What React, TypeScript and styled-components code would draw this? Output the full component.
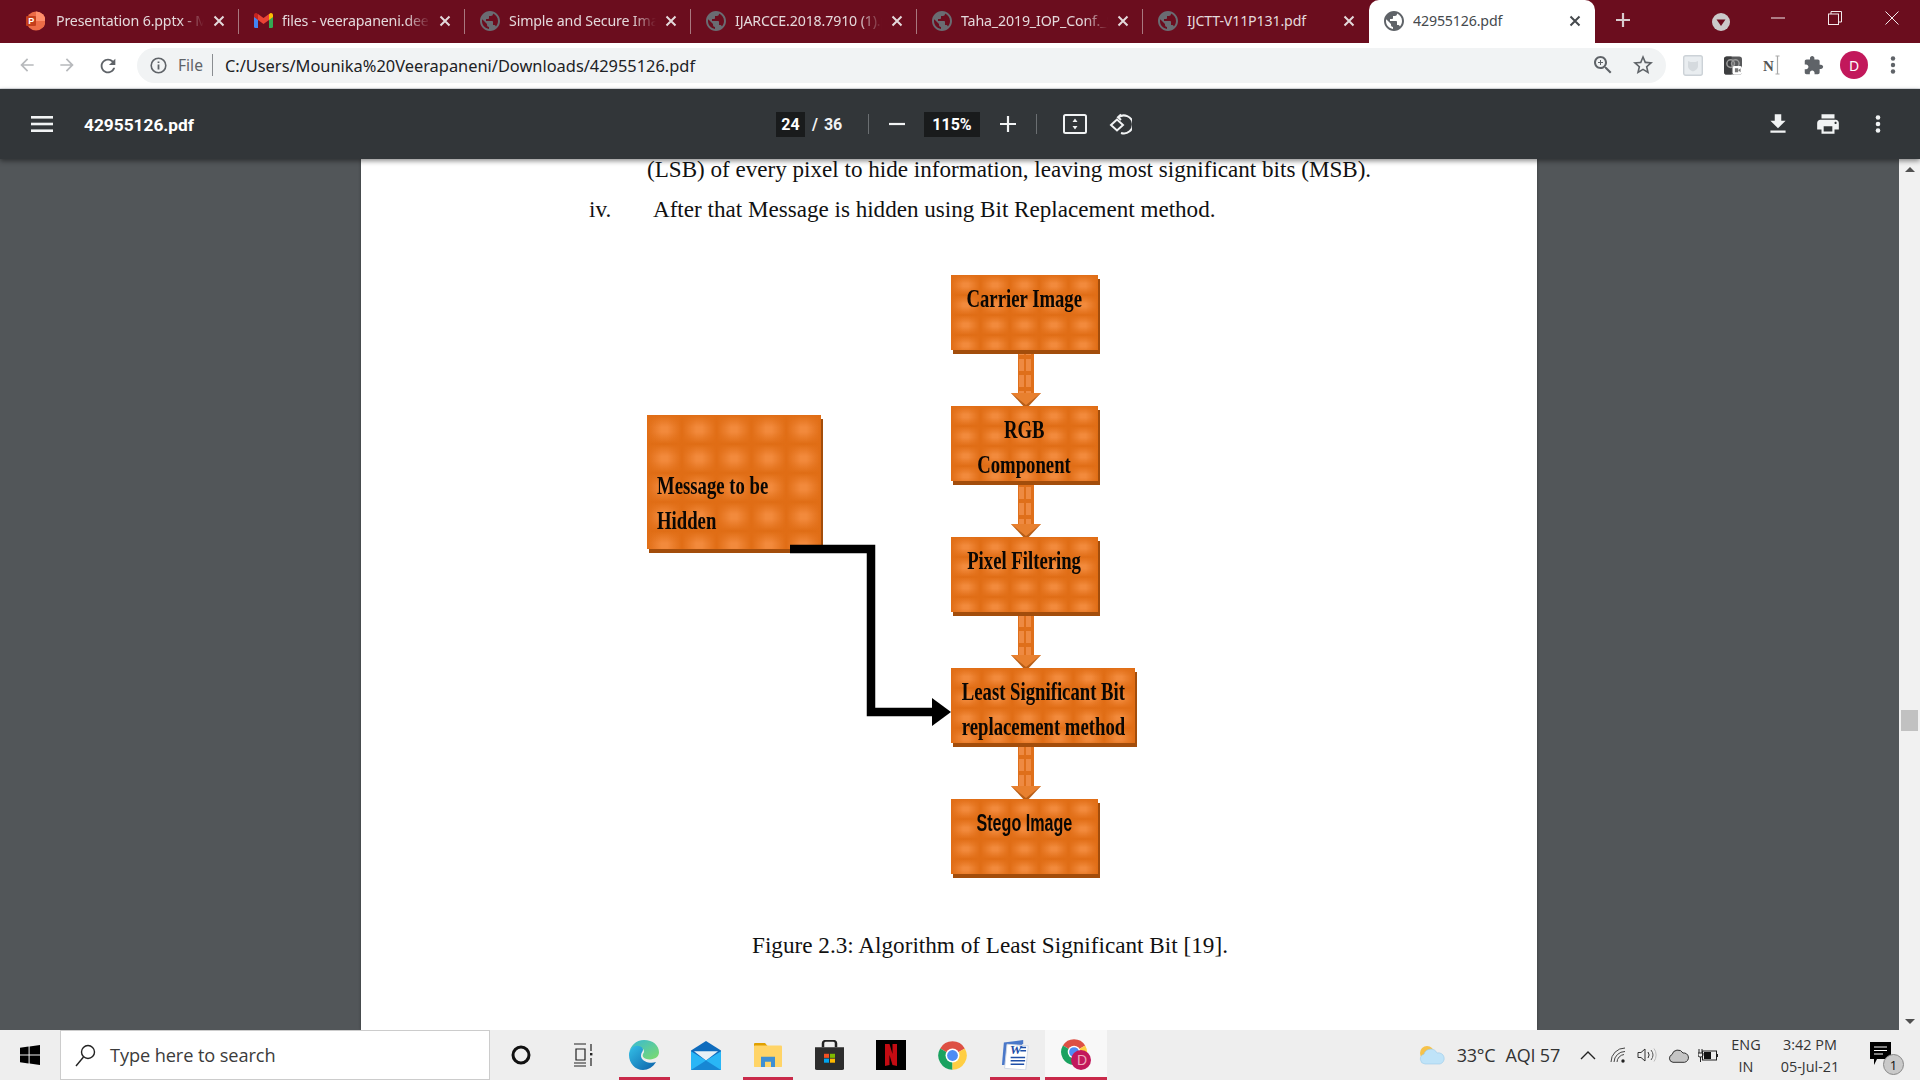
import React from "react";
import styled, { createGlobalStyle } from "styled-components";

const Global = createGlobalStyle`
  html, body { margin: 0; padding: 0; width: 1920px; height: 1080px; overflow: hidden; background: #525659; }
  * { box-sizing: border-box; }
  svg { display: block; flex-shrink: 0; }
`;

const Screen = styled.div`
  width: 1920px; height: 1080px; display: flex; flex-direction: column; overflow: hidden;
  font-family: "Noto Sans", "Open Sans", sans-serif;
`;

/* ---------- Tab strip ---------- */
const TabStrip = styled.div`
  height: 43px; flex: none; background: #6b0d1e; display: flex; padding-left: 13px;
`;
const Tab = styled.div<{ $active?: boolean; $sep?: boolean }>`
  width: 226px; height: 43px; flex: none; position: relative;
  display: flex; align-items: center; padding: 0 16px 2px 15px; gap: 9px;
  color: ${p => (p.$active ? "#45494d" : "#e4d9db")};
  background: ${p => (p.$active ? "#fff" : "transparent")};
  border-radius: ${p => (p.$active ? "10px 10px 0 0" : "0")};
  &::after {
    content: ""; position: absolute; right: 0; top: 9px; bottom: 9px; width: 1px;
    background: ${p => (p.$sep ? "#a9787f" : "transparent")};
  }
`;
const TabTitle = styled.span<{ $fade?: boolean }>`
  flex: 1; overflow: hidden; white-space: nowrap; font-size: 14.2px; letter-spacing: -0.15px; line-height: 18px;
  ${p => (p.$fade ? "mask-image: linear-gradient(90deg, #000 84%, transparent 100%);" : "")}
`;
const CloseMark = styled.svg`
  width: 12px; height: 12px; margin-right: -2px; stroke: currentColor; stroke-width: 2; fill: none;
`;
const PptSvg = styled.svg`
  width: 20px; height: 20px; margin: 0 2px 0 -3px;
`;
const NewTab = styled.div`
  width: 56px; height: 43px; display: flex; align-items: center; justify-content: center; color: #d9cccf; padding-bottom: 4px;
`;
const StripSpacer = styled.div`
  flex: 1; display: flex; align-items: center; padding: 0 0 0 61px;
`;
const WinControls = styled.div`
  display: flex; color: #f3eaec;
`;
const WinBtn = styled.div`
  width: 57px; height: 36px; display: flex; align-items: center; justify-content: center;
`;

/* ---------- Address bar ---------- */
const AddressBar = styled.div`
  height: 46px; flex: none; background: #fff; border-bottom: 1px solid #dfe1e5;
  display: flex; align-items: center; padding: 0 0 1px 17px;
`;
const NavIcon = styled.div`
  width: 20px; height: 20px; margin-right: 20px; color: #5f6368;
`;
const Omnibox = styled.div`
  width: 1529px; height: 35px; flex: none; background: #f1f3f4; border-radius: 18px; display: flex; align-items: center;
  padding-left: 13px; color: #202124;
`;
const FileLabel = styled.span`
  color: #5f6368; margin-left: 11px; padding-right: 9px; border-right: 1px solid #8a8d91; line-height: 22px; font-size: 15.6px;
`;
const UrlText = styled.span`
  margin-left: 12px; font-size: 16.4px;
`;
const OmniEnd = styled.div`
  margin-left: auto; display: flex; align-items: center; gap: 16px; padding-right: 11px; color: #5f6368;
`;
const ExtRow = styled.div`
  display: flex; align-items: center; margin-left: 17px; gap: 21px;
`;
const Avatar = styled.div`
  width: 28px; height: 28px; border-radius: 50%; background: #c2185b; color: #fff; font-size: 14px;
  display: flex; align-items: center; justify-content: center; margin-left: 16px;
`;
const MenuDots = styled.div`
  margin-left: 22px; color: #5f6368;
`;

/* ---------- PDF toolbar ---------- */
const PdfBar = styled.div`
  height: 70px; flex: none; background: #323639; color: #f1f3f4; display: flex; align-items: center; position: relative;
  z-index: 2; box-shadow: 0 2px 5px rgba(0,0,0,.45); font-family: Roboto, sans-serif; padding-left: 31px;
`;
const PdfTitle = styled.span`
  width: 692px; flex: none; margin-left: 31px; padding-top: 1px; font-size: 17.3px; font-weight: 700; color: #fff;
`;
const DarkField = styled.span<{ $w: number }>`
  width: ${p => p.$w}px; height: 25px; background: #191b1c; color: #fff; font-size: 16px; font-weight: 700; flex: none;
  display: flex; align-items: center; justify-content: center;
`;
const PageTotal = styled.span`
  width: 63px; padding-left: 7px; font-size: 16px; font-weight: 700; flex: none; word-spacing: 2px;
`;
const BarSep = styled.span`
  width: 1px; height: 20px; background: #6b6f72; flex: none; display: block;
`;
const BarIcon = styled.div<{ $ml: number }>`
  margin-left: ${p => p.$ml}px; flex: none; color: #f1f3f4; display: flex;
`;

/* ---------- Viewer ---------- */
const Viewer = styled.div`
  flex: 1; min-height: 0; background: #525659; display: flex; overflow: hidden;
`;
const PageArea = styled.div`
  flex: 1; display: flex; padding-left: 361px;
`;
const Sheet = styled.div`
  width: 1176px; background: #fff; color: #111; font-family: "Liberation Serif", serif; font-size: 24px; overflow: hidden;
  box-shadow: 0 0 3px rgba(0,0,0,.3);
`;
const TextLine = styled.div<{ $top?: number; $left: number }>`
  font-size: 23.1px; line-height: 40px; height: 40px; margin-top: ${p => p.$top ?? 0}px; padding-left: ${p => p.$left}px;
  white-space: nowrap; display: flex;
`;
const Marker = styled.span`
  width: 64px; flex: none;
`;
const Canvas = styled.div`
  position: relative; height: 700px;
`;
const Node = styled.div<{ $x: number; $y: number; $w: number; $h: number; $tw: number; $th: number; $pad?: number; $align?: string; $sans?: boolean }>`
  position: absolute; left: ${p => p.$x - 361}px; top: ${p => p.$y - 229}px; width: ${p => p.$w}px; height: ${p => p.$h}px;
  background:
    linear-gradient(90deg, #e06d15 0, rgba(224,109,21,0) 42%, rgba(224,109,21,0) 58%, #e06d15 100%) 0 0 / ${p => p.$tw}px 100%,
    linear-gradient(180deg, #e06d15 0, rgba(224,109,21,0) 42%, rgba(224,109,21,0) 58%, #e06d15 100%) 0 0 / 100% ${p => p.$th}px,
    #f28a3c;
  box-shadow: 2px 4px 0 #a34d0b;
  display: flex; flex-direction: column; align-items: ${p => p.$align ?? "center"};
  padding: ${p => p.$pad ?? 6}px 0 0 ${p => (p.$align ? 10 : 0)}px;
  font-family: ${p => (p.$sans ? '"Liberation Sans", sans-serif' : '"Liberation Serif", serif')};
  font-weight: 700; color: #0a0704;
`;
const NodeText = styled.span<{ $sx?: number; $size?: number; $origin?: string }>`
  display: block; white-space: nowrap; font-size: ${p => p.$size ?? 26}px; line-height: 35px;
  transform: scaleX(${p => p.$sx ?? 0.72}); transform-origin: ${p => p.$origin ?? "center"}; filter: blur(0.3px);
`;
const Wires = styled.svg`
  position: absolute; left: 0; top: 0; width: 1176px; height: 700px;
`;
const Caption = styled.div`
  font-size: 23.2px; line-height: 32px; padding-left: 391px; white-space: nowrap;
`;
const Scrollbar = styled.div`
  width: 21px; flex: none; background: #f1f1f1; position: relative; display: flex; flex-direction: column; justify-content: space-between;
  align-items: center; padding: 8px 0 6px;
`;
const ScrollThumb = styled.div`
  position: absolute; left: 2px; top: 551px; width: 17px; height: 21px; background: #c1c1c1;
`;

/* ---------- Taskbar ---------- */
const Taskbar = styled.div`
  height: 50px; flex: none; background: #eee; display: flex; align-items: stretch; font-family: "Open Sans", "Noto Sans", sans-serif;
  color: #222;
`;
const StartBtn = styled.div`
  width: 60px; flex: none; display: flex; align-items: center; justify-content: center;
`;
const SearchBox = styled.div`
  width: 430px; flex: none; background: #fff; border: 1px solid #ccc; display: flex; align-items: center; padding-left: 14px; gap: 14px;
  font-size: 18.2px; color: #3b3b3b; letter-spacing: -0.1px;
`;
const TaskSlot = styled.div<{ $w?: number; $on?: boolean; $line?: boolean }>`
  width: ${p => p.$w ?? 61.7}px; flex: none; display: flex; align-items: center; justify-content: center; position: relative;
  background: ${p => (p.$on ? "#f8f8f8" : "transparent")};
  ${p => p.$line ? `&::after { content: ""; position: absolute; bottom: 0; height: 3px; left: ${p.$on ? 0 : 6}px; right: ${p.$on ? 0 : 5}px; background: #c92a4a; }` : ""}
`;
const Tray = styled.div`
  margin-left: auto; display: flex; align-items: center; font-size: 18px; color: #333; padding-right: 26px;
`;
const TrayText = styled.span<{ $ml: number }>`
  margin-left: ${p => p.$ml}px; white-space: nowrap; letter-spacing: -0.2px;
`;
const TrayIcon = styled.div<{ $ml: number }>`
  margin-left: ${p => p.$ml}px; color: #333;
`;
const TrayStack = styled.div<{ $w: number; $ml: number }>`
  width: ${p => p.$w}px; margin-left: ${p => p.$ml}px; display: flex; flex-direction: column; align-items: center; gap: 3px;
  font-size: 14.4px; line-height: 19px; color: #333; white-space: nowrap;
`;
const NotifyWrap = styled.div`
  margin-left: 24px; position: relative; width: 24px; height: 26px;
`;
const NotifyBadge = styled.span`
  position: absolute; right: -10px; bottom: -7px; width: 21px; height: 21px; border-radius: 50%; background: #c9c9c9;
  border: 1px solid #888; font-size: 13px; display: flex; align-items: center; justify-content: center; color: #111;
`;

/* ---------- Icons ---------- */
const P = ({ d, size = 20, fill = "currentColor", vb = 24 }: { d: string; size?: number; fill?: string; vb?: number }) => (
  <svg width={size} height={size} viewBox={`0 0 ${vb} ${vb}`}><path d={d} fill={fill} /></svg>
);
const GLOBE = "M12 2C6.48 2 2 6.48 2 12s4.48 10 10 10 10-4.48 10-10S17.52 2 12 2zm-1 17.93c-3.95-.49-7-3.85-7-7.93 0-.62.08-1.21.21-1.79L9 15v1c0 1.1.9 2 2 2v1.93zm6.9-2.54c-.26-.81-1-1.39-1.9-1.39h-1v-3c0-.55-.45-1-1-1H8v-2h2c.55 0 1-.45 1-1V7h2c1.1 0 2-.9 2-2v-.41c2.93 1.19 5 4.06 5 7.41 0 2.08-.8 3.97-2.1 5.39z";
const Globe = ({ active }: { active?: boolean }) => (
  <svg width="20" height="20" viewBox="2 2 20 20">
    <circle cx="12" cy="12" r="10" fill={active ? "#fff" : "#6b0d1e"} />
    <path d={GLOBE} fill={active ? "#5f6368" : "#6a6c72"} />
  </svg>
);
const PptIcon = () => (
  <PptSvg viewBox="0 0 20 20">
    <circle cx="11" cy="10" r="9.5" fill="#ed6c47" />
    <path d="M11 .5A9.5 9.5 0 0 1 20.5 10H11z" fill="#ff8f6b" />
    <rect x="1" y="5" width="10" height="10" rx="1" fill="#c43e1c" />
    <text x="3.3" y="13.4" fontSize="9" fontWeight="700" fontFamily="Liberation Sans" fill="#fff">P</text>
  </PptSvg>
);
const GmailIcon = () => (
  <svg width="19" height="15" viewBox="0 0 19 15">
    <path d="M0 2v11.5A1.5 1.5 0 0 0 1.5 15H4V6z" fill="#4285f4" />
    <path d="M15 15h2.5a1.5 1.5 0 0 0 1.5-1.5V2l-4 4z" fill="#34a853" />
    <path d="M15 1v6l4-3V2c0-1.6-2-2.6-3-1.5z" fill="#fbbc04" />
    <path d="M4 7V1L9.5 5 15 1v6L9.5 11z" fill="#ea4335" />
    <path d="M0 2c0-1.6 2-2.6 3-1.5L4 1v6L0 4z" fill="#c5221f" />
  </svg>
);
const Close = () => (
  <CloseMark viewBox="0 0 12 12"><path d="M1.5 1.5l9 9M10.5 1.5l-9 9" /></CloseMark>
);
const ChromeShape = () => (
  <>
    <path d="M12 12L2.47 6.5A11 11 0 0 1 21.53 6.5z" fill="#dd5044" />
    <path d="M12 12L2.47 6.5A11 11 0 0 0 12 23z" fill="#1aa260" />
    <path d="M12 12L12 23A11 11 0 0 0 21.53 6.5z" fill="#ffce43" />
    <circle cx="12" cy="12" r="5.4" fill="#fff" />
    <circle cx="12" cy="12" r="4.2" fill="#4e8cf5" />
  </>
);

const tabs = [
  { t: "Presentation 6.pptx - Microsoft", i: <PptIcon />, f: true },
  { t: "files - veerapaneni.deepika@gmail", i: <GmailIcon />, f: true },
  { t: "Simple and Secure Image Stegano", i: <Globe />, f: true },
  { t: "IJARCCE.2018.7910 (1).pdf", i: <Globe />, f: true },
  { t: "Taha_2019_IOP_Conf._Ser._Mater", i: <Globe />, f: true },
  { t: "IJCTT-V11P131.pdf", i: <Globe />, f: false },
];

const Arrow = ({ x, y1, y2 }: { x: number; y1: number; y2: number }) => {
  const X = x - 361, A = y1 - 229, B = y2 - 229;
  return (
    <g>
      <rect x={X} y={A} width="16" height={B - A} fill="url(#shaft)" />
      <path d={`M${X - 7} ${B}L${X + 8} ${B + 3}L${X + 23} ${B}L${X + 8} ${B + 16}z`} fill="#b85e17" />
      <path d={`M${X - 7} ${B}H${X + 23}L${X + 8} ${B + 12}z`} fill="#e8802f" />
    </g>
  );
};

export default function App() {
  return (
    <Screen>
      <Global />
      <TabStrip>
        {tabs.map((x, i) => (
          <Tab key={i} $sep={i < 5}>
            {x.i}
            <TabTitle $fade={x.f}>{x.t}</TabTitle>
            <Close />
          </Tab>
        ))}
        <Tab $active>
          <Globe active />
          <TabTitle>42955126.pdf</TabTitle>
          <Close />
        </Tab>
        <NewTab>
          <svg width="16" height="16" viewBox="0 0 16 16"><path d="M8 1v14M1 8h14" stroke="currentColor" strokeWidth="2.2" /></svg>
        </NewTab>
        <StripSpacer>
          <svg width="18" height="18" viewBox="0 0 18 18"><circle cx="9" cy="9" r="9" fill="#cbc9ca" /><path d="M4.5 6.5h9L9 13z" fill="#6b0d1e" /></svg>
        </StripSpacer>
        <WinControls>
          <WinBtn><svg width="14" height="14" viewBox="0 0 14 14"><path d="M0 7h14" stroke="currentColor" strokeWidth="1" /></svg></WinBtn>
          <WinBtn><svg width="14" height="14" viewBox="0 0 14 14" fill="none" stroke="currentColor"><rect x=".5" y="3" width="10" height="10.5" /><path d="M3 3V.5h10.5V11H10.5" /></svg></WinBtn>
          <WinBtn><svg width="14" height="14" viewBox="0 0 14 14"><path d="M.5.5l13 13M13.5.5l-13 13" stroke="currentColor" strokeWidth="1" /></svg></WinBtn>
        </WinControls>
      </TabStrip>

      <AddressBar>
        <NavIcon><P d="M20 11H7.83l5.59-5.59L12 4l-8 8 8 8 1.41-1.41L7.83 13H20v-2z" fill="#b7b9bc" /></NavIcon>
        <NavIcon><P d="M4 13h12.17l-5.59 5.59L12 20l8-8-8-8-1.41 1.41L16.17 11H4v2z" fill="#b7b9bc" /></NavIcon>
        <NavIcon><P d="M17.65 6.35C16.2 4.9 14.21 4 12 4c-4.42 0-7.99 3.58-7.99 8s3.57 8 7.99 8c3.73 0 6.84-2.55 7.73-6h-2.08c-.82 2.33-3.04 4-5.65 4-3.31 0-6-2.69-6-6s2.69-6 6-6c1.66 0 3.14.69 4.22 1.78L13 11h7V4l-2.35 2.35z" size={22} /></NavIcon>
        <Omnibox>
          <svg width="17" height="17" viewBox="0 0 17 17" fill="none"><circle cx="8.5" cy="8.5" r="7.3" stroke="#5f6368" strokeWidth="1.6" /><path d="M8.5 7.5v5M8.5 4.5v1.6" stroke="#5f6368" strokeWidth="1.8" /></svg>
          <FileLabel>File</FileLabel>
          <UrlText>C:/Users/Mounika%20Veerapaneni/Downloads/42955126.pdf</UrlText>
          <OmniEnd>
            <P size={24} d="M15.5 14h-.79l-.28-.27C15.41 12.59 16 11.11 16 9.5 16 5.91 13.09 3 9.5 3S3 5.91 3 9.5 5.91 16 9.5 16c1.61 0 3.09-.59 4.23-1.57l.27.28v.79l5 4.99L20.49 19l-4.99-5zm-6 0C7.01 14 5 11.99 5 9.5S7.01 5 9.5 5 14 7.01 14 9.5 11.99 14 9.5 14zM12 10h-2v2H9v-2H7V9h2V7h1v2h2v1z" />
            <P size={24} d="M22 9.24l-7.19-.62L12 2 9.19 8.63 2 9.24l5.46 4.73L5.82 21 12 17.27 18.18 21l-1.63-7.03L22 9.24zM12 15.4l-3.76 2.27 1-4.28-3.32-2.88 4.38-.38L12 6.1l1.71 4.04 4.38.38-3.32 2.88 1 4.28L12 15.4z" />
          </OmniEnd>
        </Omnibox>
        <ExtRow>
          <svg width="20" height="21" viewBox="0 0 20 21"><rect x=".7" y=".7" width="18.6" height="19.6" rx="2" fill="#e9edf0" stroke="#ccd2d7" strokeWidth="1.4" /><path d="M5 6l2.500 1h5L15 6v5c0 3-2.500 4.500-5 5.500-2.500-1-5-2.500-5-5.500z" fill="#d5dade" /></svg>
          <svg width="18" height="19" viewBox="0 0 19 19"><rect width="19" height="19" rx="3" fill="#58595b" /><path d="M0 3a3 3 0 0 1 3-3h5v19H3a3 3 0 0 1-3-3z" fill="#3c3d3f" /><circle cx="7" cy="7.5" r="4" fill="none" stroke="#9a9a9a" strokeWidth="1.6" /><circle cx="12" cy="7.5" r="4" fill="none" stroke="#9a9a9a" strokeWidth="1.6" /><rect x="9" y="10" width="10" height="9" rx="2" fill="#fff" /><path d="M11.500 12.500h3.500v4h-3.500zM15 14.500l2.500-2v4z" fill="#777" /></svg>
          <svg width="19" height="22" viewBox="0 0 19 22"><text x="0" y="16.5" fontSize="15" fontFamily="Liberation Serif" fontWeight="700" fill="#555">N</text><path d="M12.500 2h4M12.500 20h4M14.500 2v18" stroke="#a9a9a9" strokeWidth="1.2" fill="none" /></svg>
          <P size={21} fill="#5f6368" d="M20.500 11H19V7c0-1.100-.9-2-2-2h-4V3.500C13 2.120 11.880 1 10.500 1S8 2.120 8 3.500V5H4c-1.100 0-1.990.9-1.990 2v3.800H3.500c1.490 0 2.700 1.210 2.700 2.700s-1.210 2.700-2.700 2.700H2V20c0 1.100.9 2 2 2h3.800v-1.500c0-1.490 1.210-2.700 2.700-2.700 1.490 0 2.700 1.210 2.700 2.700V22H17c1.100 0 2-.9 2-2v-4h1.500c1.380 0 2.500-1.120 2.500-2.500S21.880 11 20.500 11z" />
        </ExtRow>
        <Avatar>D</Avatar>
        <MenuDots><svg width="6" height="18" viewBox="0 0 6 18" fill="currentColor"><circle cx="3" cy="2.5" r="2.2" /><circle cx="3" cy="9" r="2.2" /><circle cx="3" cy="15.5" r="2.2" /></svg></MenuDots>
      </AddressBar>

      <PdfBar>
        <svg width="22" height="16" viewBox="0 0 22 16" fill="#f1f3f4"><rect width="22" height="2.6" /><rect y="6.7" width="22" height="2.6" /><rect y="13.4" width="22" height="2.6" /></svg>
        <PdfTitle>42955126.pdf</PdfTitle>
        <DarkField $w={29}>24</DarkField>
        <PageTotal>/ 36</PageTotal>
        <BarSep />
        <BarIcon $ml={20}><svg width="16" height="16" viewBox="0 0 16 16"><path d="M0 8h16" stroke="currentColor" strokeWidth="2.2" /></svg></BarIcon>
        <BarIcon $ml={19}><DarkField $w={56}>115%</DarkField></BarIcon>
        <BarIcon $ml={20}><svg width="16" height="16" viewBox="0 0 16 16"><path d="M8 0v16M0 8h16" stroke="currentColor" strokeWidth="2.2" /></svg></BarIcon>
        <BarIcon $ml={20}><BarSep /></BarIcon>
        <BarIcon $ml={26}><svg width="24" height="20" viewBox="0 0 24 20" fill="none"><rect x="1" y="1" width="22" height="18" rx="1.5" stroke="currentColor" strokeWidth="2" /><path d="M9.500 8L12 4.500 14.500 8zM9.500 12L12 15.500 14.500 12z" fill="currentColor" /></svg></BarIcon>
        <BarIcon $ml={21}><svg width="24" height="24" viewBox="0 0 24 24" fill="none" stroke="currentColor" strokeWidth="2"><path d="M13 2.500l-3 2.700 3 2.800" /><path d="M10.500 5.200A9 9 0 1 1 13 21" /><path d="M9 7.500L3 13l6 5.500 6-5.500z" /></svg></BarIcon>
        <BarIcon $ml={633}><P size={26} d="M19 9h-4V3H9v6H5l7 7 7-7zM5 18v2h14v-2H5z" /></BarIcon>
        <BarIcon $ml={24}><P size={26} d="M19 8H5c-1.660 0-3 1.340-3 3v6h4v4h12v-4h4v-6c0-1.660-1.340-3-3-3zm-3 11H8v-5h8v5zm3-7c-.55 0-1-.45-1-1s.45-1 1-1 1 .45 1 1-.45 1-1 1zm-1-9H6v4h12V3z" /></BarIcon>
        <BarIcon $ml={34}><svg width="6" height="18" viewBox="0 0 6 18" fill="currentColor"><circle cx="3" cy="2.5" r="2.3" /><circle cx="3" cy="9" r="2.3" /><circle cx="3" cy="15.5" r="2.3" /></svg></BarIcon>
      </PdfBar>

      <Viewer>
        <PageArea>
          <Sheet>
            <TextLine $top={-10} $left={286}>(LSB) of every pixel to hide information, leaving most significant bits (MSB).</TextLine>
            <TextLine $left={228}><Marker>iv.</Marker>After that Message is hidden using Bit Replacement method.</TextLine>
            <Canvas>
              <Wires viewBox="0 0 1176 700">
                <defs>
                  <pattern id="shaft" width="16" height="16" patternUnits="userSpaceOnUse">
                    <rect width="16" height="16" fill="#df6f1a" />
                    <rect x="2" y="2" width="5" height="12" fill="#ee8a42" />
                    <rect x="9" y="2" width="5" height="12" fill="#ee8a42" />
                  </pattern>
                </defs>
                <Arrow x={1018} y1={350} y2={393} />
                <Arrow x={1018} y1={481} y2={524} />
                <Arrow x={1018} y1={612} y2={655} />
                <Arrow x={1018} y1={743} y2={786} />
              </Wires>
              <Node $x={951} $y={275} $w={147} $h={75} $tw={29.4} $th={20}><NodeText>Carrier Image</NodeText></Node>
              <Node $x={951} $y={406} $w={147} $h={75} $tw={29.4} $th={20}><NodeText>RGB</NodeText><NodeText>Component</NodeText></Node>
              <Node $x={951} $y={537} $w={147} $h={75} $tw={29.4} $th={20}><NodeText>Pixel Filtering</NodeText></Node>
              <Node $x={951} $y={668} $w={184} $h={75} $tw={30.6} $th={20}><NodeText>Least Significant Bit</NodeText><NodeText>replacement method</NodeText></Node>
              <Node $x={951} $y={799} $w={147} $h={75} $tw={29.4} $th={20} $sans $pad={7}><NodeText $size={23} $sx={0.7}>Stego Image</NodeText></Node>
              <Node $x={647} $y={415} $w={174} $h={134} $tw={34.8} $th={29} $align="flex-start" $pad={53}><NodeText $origin="left">Message to be</NodeText><NodeText $origin="left">Hidden</NodeText></Node>
              <Wires viewBox="0 0 1176 700">
                <path d="M429 320H510V483H575" fill="none" stroke="#000" strokeWidth="8.5" />
                <path d="M571 469L590 483L571 497z" fill="#000" />
              </Wires>
            </Canvas>
            <Caption>Figure 2.3: Algorithm of Least Significant Bit [19].</Caption>
          </Sheet>
        </PageArea>
        <Scrollbar>
          <svg width="10" height="5" viewBox="0 0 10 5"><path d="M0 5L5 0l5 5z" fill="#505050" /></svg>
          <ScrollThumb />
          <svg width="10" height="5" viewBox="0 0 10 5"><path d="M0 0l5 5 5-5z" fill="#505050" /></svg>
        </Scrollbar>
      </Viewer>

      <Taskbar>
        <StartBtn>
          <svg width="20" height="20" viewBox="0 0 20 20" fill="#000"><path d="M0 2.800L8.600 1.600v8H0zM9.600 1.400L20 0v9.600H9.600zM0 10.500h8.600v8L0 17.300zM9.600 10.500H20V20L9.600 18.600z" /></svg>
        </StartBtn>
        <SearchBox>
          <svg width="21" height="23" viewBox="0 0 21 23" fill="none" stroke="#222" strokeWidth="1.4"><circle cx="13" cy="8" r="6.5" /><path d="M8.500 13L1 22" /></svg>
          Type here to search
        </SearchBox>
        <TaskSlot><svg width="20" height="20" viewBox="0 0 20 20"><circle cx="10" cy="10" r="8" fill="none" stroke="#111" strokeWidth="3" /></svg></TaskSlot>
        <TaskSlot>
          <svg width="20" height="24" viewBox="0 0 20 24" fill="none" stroke="#222" strokeWidth="1.200"><path d="M1 1h12M1 23h12M1 20h12M3 6h9v11H3zM18 1v7M18 15v8" /><rect x="17" y="10" width="2.400" height="2.400" fill="#222" stroke="none" /></svg>
        </TaskSlot>
        <TaskSlot $line>
          <svg width="32" height="32" viewBox="0 0 32 36" preserveAspectRatio="none"><defs><linearGradient id="edgeA" x1="0" y1="0" x2="1" y2="1"><stop offset="0" stopColor="#34c1e8" /><stop offset="1" stopColor="#0b5fa8" /></linearGradient><linearGradient id="edgeB" x1="0" y1="0" x2="1" y2="1"><stop offset="0" stopColor="#35b8d8" /><stop offset="1" stopColor="#7fdc6a" /></linearGradient></defs><path d="M16 1c9 0 15 6 15 14 0 5-4 8-9 8-3 0-6-1-7-3-1-3 1-4 1-6 0-3-3-5-7-5-4 0-8 3-8 7C2 8 8 1 16 1z" fill="url(#edgeB)" /><path d="M1 18C1 10 7 6 11 8c4 1 5 4 3 7-2 4-1 8 3 10 3 2 8 2 11 1-3 6-8 9-13 9C7 35 1 27 1 18z" fill="url(#edgeA)" /></svg>
        </TaskSlot>
        <TaskSlot>
          <svg width="30" height="29" viewBox="0 0 30 34" preserveAspectRatio="none"><path d="M15 0L30 11v23H0V11z" fill="#0f6cbd" /><path d="M3 12h24l-12 11z" fill="#e6f0f6" /><path d="M0 12l15 11 15-11v22H0z" fill="#29b6f6" /><path d="M0 34l15-11 15 11z" fill="#1787d4" /></svg>
        </TaskSlot>
        <TaskSlot $line>
          <svg width="28" height="24" viewBox="0 0 28 28" preserveAspectRatio="none"><path d="M0 1a1 1 0 0 1 1-1h10l3 4H0z" fill="#e0a000" /><rect y="3" width="28" height="25" rx="1" fill="#ffd467" /><path d="M7 28V16h14v12h-4v-6h-6v6z" fill="#3f8fd2" /></svg>
        </TaskSlot>
        <TaskSlot>
          <svg width="29" height="30" viewBox="0 0 29 37" preserveAspectRatio="none"><path d="M8 9V4a3 3 0 0 1 3-3h7a3 3 0 0 1 3 3v5" fill="none" stroke="#222" strokeWidth="2.5" /><path d="M0 9h29v26a2 2 0 0 1-2 2H2a2 2 0 0 1-2-2z" fill="#2d2d2d" /><rect x="9" y="17" width="5" height="5" fill="#f25022" /><rect x="15" y="17" width="5" height="5" fill="#7fba00" /><rect x="9" y="23" width="5" height="5" fill="#00a4ef" /><rect x="15" y="23" width="5" height="5" fill="#ffb900" /></svg>
        </TaskSlot>
        <TaskSlot>
          <svg width="30" height="30" viewBox="0 0 30 30"><rect width="30" height="30" fill="#000" /><path d="M9 4h4.500l3 10V4H21v22l-4.500-1-3-10v10L9 26z" fill="#c30b12" /></svg>
        </TaskSlot>
        <TaskSlot><svg width="31" height="31" viewBox="0 0 24 24"><ChromeShape /></svg></TaskSlot>
        <TaskSlot $line>
          <svg width="29" height="30" viewBox="0 0 30 36" preserveAspectRatio="none"><path d="M4 3l20-3v4L6 30H2z" fill="#4a78c9" /><rect x="6" y="6" width="22" height="29" fill="#fff" stroke="#cfd6e4" transform="rotate(5 17 20)" /><text x="10" y="17" fontSize="14" fontStyle="italic" fontWeight="700" fontFamily="Liberation Serif" fill="#1f4fa8">W</text><path d="M21 9h6M21 13h6M11 21h15M11 25h15M11 29h14" stroke="#1f4fa8" strokeWidth="1.800" /></svg>
        </TaskSlot>
        <TaskSlot $line $on>
          <svg width="34" height="34" viewBox="0 0 34 34"><g transform="translate(1 0) scale(1.17)"><ChromeShape /></g><circle cx="22" cy="22" r="10" fill="#c2185b" /><text x="18" y="27" fontSize="14" fontFamily="Liberation Sans" fill="#eab">D</text></svg>
        </TaskSlot>
        <Tray>
          <svg width="26" height="20" viewBox="0 0 26 20"><circle cx="8" cy="8" r="7" fill="#f6c24a" /><path d="M6 19a5 5 0 0 1-1-9.800A7 7 0 0 1 18 8a5.500 5.500 0 0 1 3 11z" fill="#bfe3f8" stroke="#9ccbe9" strokeWidth=".6" /></svg>
          <TrayText $ml={12}>33°C</TrayText>
          <TrayText $ml={10}>AQI 57</TrayText>
          <TrayIcon $ml={20}><svg width="16" height="10" viewBox="0 0 16 10" fill="none" stroke="#222" strokeWidth="1.400"><path d="M1 9l7-7 7 7" /></svg></TrayIcon>
          <TrayIcon $ml={14}><svg width="17" height="16" viewBox="0 0 17 16" fill="none" stroke="#444" strokeWidth="1"><path d="M1 15A14 14 0 0 1 15 1M4 15A11 11 0 0 1 15 4.500M7 15a8 8 0 0 1 7-7.500" /><circle cx="13" cy="14" r="1.700" fill="#222" stroke="none" /></svg></TrayIcon>
          <TrayIcon $ml={10}><svg width="20" height="16" viewBox="0 0 20 16" fill="none" stroke="#333" strokeWidth="1"><path d="M1 5.500h3L8 2v12L4 10.500H1z" /><path d="M11 5a5 5 0 0 1 0 6" /><path d="M14 3a8 8 0 0 1 0 10" stroke="#555" /><path d="M17 1.500a11 11 0 0 1 0 13" stroke="#bbb" /></svg></TrayIcon>
          <TrayIcon $ml={11}><svg width="21" height="15" viewBox="0 0 21 15"><path d="M5 14.300a4 4 0 0 1-1-7.700A6 6 0 0 1 15 5a4.600 4.600 0 0 1 1.500 9.300z" fill="#c5c5c5" stroke="#333" strokeWidth="1" /></svg></TrayIcon>
          <TrayIcon $ml={9}><svg width="20" height="14" viewBox="0 0 20 14"><rect x="4.500" y="3" width="14" height="9" fill="none" stroke="#222" /><rect x="6" y="4" width="7" height="7" fill="#111" /><rect x="18.500" y="6" width="1.500" height="3" fill="#222" /><path d="M1 1v4M4 1v4M0 5h5v2a2 2 0 0 1-2 2h-1a2 2 0 0 1-2-2zM2.500 9v5" stroke="#222" fill="none" /></svg></TrayIcon>
          <TrayStack $w={34} $ml={11}><span>ENG</span><span>IN</span></TrayStack>
          <TrayStack $w={72} $ml={11}><span>3:42 PM</span><span>05-Jul-21</span></TrayStack>
          <NotifyWrap>
            <svg width="21" height="24" viewBox="0 0 21 24"><path d="M0 0h21v17H7l-3 6v-6H0z" fill="#000" /><path d="M4 5h13M4 8.500h13M4 12h9" stroke="#fff" strokeWidth="1" /></svg>
            <NotifyBadge>1</NotifyBadge>
          </NotifyWrap>
        </Tray>
      </Taskbar>
    </Screen>
  );
}
